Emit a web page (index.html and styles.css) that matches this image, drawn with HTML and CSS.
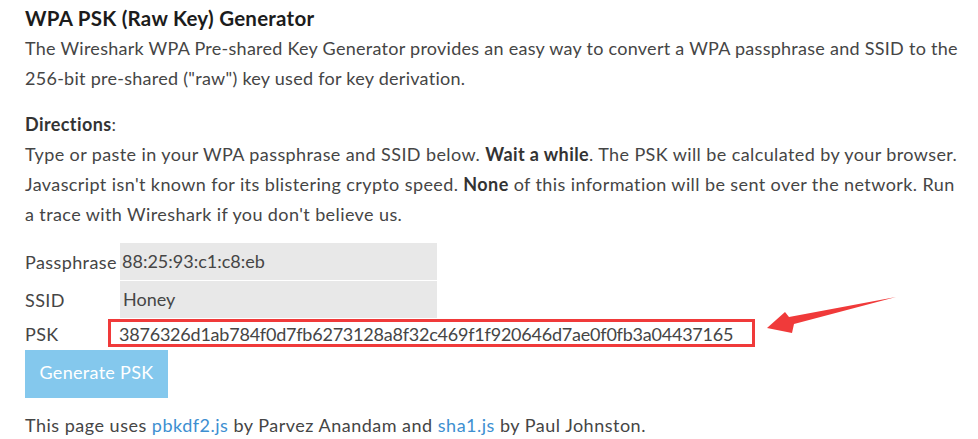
FILE: index.html
```html
<!DOCTYPE html>
<html>
<head>
<meta charset="utf-8">
<link rel="stylesheet" href="styles.css">
</head>
<body>
<div class="page">
  <h2 class="title">WPA PSK (Raw Key) Generator</h2>
  <p class="intro">The Wireshark WPA Pre-shared Key Generator provides an easy way to convert a WPA passphrase and SSID to the 256-bit pre-shared ("raw") key used for key derivation.</p>
  <p class="directions"><strong>Directions</strong>:<br>Type or paste in your WPA passphrase and SSID below. <strong>Wait a while</strong>. The PSK will be calculated by your browser. Javascript isn't known for its blistering crypto speed. <strong>None</strong> of this information will be sent over the network. Run a trace with Wireshark if you don't believe us.</p>
  <div class="form">
    <div class="label">Passphrase</div>
    <div class="field">88:25:93:c1:c8:eb</div>
    <div class="label">SSID</div>
    <div class="field ssid">Honey</div>
    <div class="label">PSK</div>
    <div class="psk">3876326d1ab784f0d7fb6273128a8f32c469f1f920646d7ae0f0fb3a04437165</div>
  </div>
  <button class="btn">Generate PSK</button>
  <p class="credits">This page uses <a href="#">pbkdf2.js</a> by Parvez Anandam and <a href="#">sha1.js</a> by Paul Johnston.</p>
  <div class="redbox"></div>
  <svg class="arrow" width="978" height="439" viewBox="0 0 978 439"><polygon points="767,328 785,312 789,317 896,297 794,324 792,333" fill="#f03a3a"/></svg>
</div>
</body>
</html>
```
FILE: styles.css
```css
html, body {
  margin: 0;
  padding: 0;
  background: #fff;
}
.page {
  position: relative;
  width: 978px;
  height: 439px;
  overflow: hidden;
  box-sizing: border-box;
  padding: 0 15px 0 25px;
  font-family: Lato, "Noto Sans", sans-serif;
  font-size: 18px;
  line-height: 30px;
  color: #454545;
  letter-spacing: 0.27px;
}
.title {
  margin: 6px 0 3px;
  font-size: 20.5px;
  line-height: 24px;
  font-weight: 700;
  color: #1c1c1c;
  letter-spacing: 0.25px;
}
.intro {
  margin: 0;
}
.directions {
  margin: 16px 0 0;
  letter-spacing: 0.4px;
}
.directions strong {
  color: #333;
}
.form {
  display: grid;
  grid-template-columns: 95px 317px;
  grid-template-rows: 37px 37px 30px;
  row-gap: 1px;
  margin-top: 14px;
  align-items: center;
}
.label {
  letter-spacing: 0.4px;
}
.field {
  height: 37px;
  line-height: 37px;
  background: #e8e8e8;
  padding-left: 2px;
  letter-spacing: 0;
}
.field.ssid {
  padding-left: 3px;
}
.psk {
  white-space: nowrap;
  margin-left: -1px;
  line-height: 30px;
  letter-spacing: -0.22px;
}
.btn {
  display: block;
  margin: 1px 0 0;
  width: 143px;
  height: 48px;
  border: 0;
  padding: 0 0 5px;
  background: #84c8ed;
  color: #fff;
  font-family: Lato, "Noto Sans", sans-serif;
  font-size: 18px;
  letter-spacing: 0.3px;
}
.credits {
  margin: 12px 0 0;
  letter-spacing: 0.5px;
}
.credits a {
  color: #3d8fd1;
  text-decoration: none;
}
.redbox {
  position: absolute;
  left: 108px;
  top: 319px;
  width: 641px;
  height: 22px;
  border: 3px solid #f03a3a;
}
.arrow {
  position: absolute;
  left: 0;
  top: 0;
}
```
